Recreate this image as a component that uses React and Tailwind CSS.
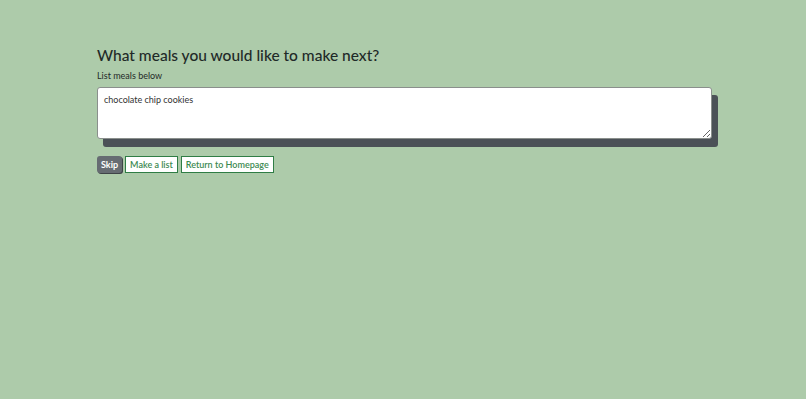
export default function App() {
  return (
    <div className="min-h-screen bg-[#adcbaa] text-[#1f2a28]" style={{ fontFamily: 'Lato, "Noto Sans", sans-serif' }}>
      <div className="pl-[97px] pt-[45px]">
        <h1 className="text-[15.5px] font-medium leading-[20px]">What meals you would like to make next?</h1>
        <p className="mt-[5px] text-[9px] leading-[11px]">List meals below</p>
        <div className="mt-[6px] w-[615px]">
          <textarea
            className="block h-[52px] w-full resize-y rounded-[3px] border border-[#8a8f8c] bg-white px-[6px] pt-[6px] pb-[4px] text-[9px] leading-[12px] text-[#333] shadow-[6px_8px_0_#4b5157] outline-none"
            defaultValue="chocolate chip cookies"
          />
        </div>
        <div className="mt-[17px] flex gap-[3px]">
          <button className="h-[17px] rounded-[3px] bg-[#666c72] px-[4px] text-[9px] font-bold leading-none text-white shadow-[1px_1px_0_#3f4448]">Skip</button>
          <button className="h-[17px] border border-[#2f7d45] bg-white px-[4px] text-[9px] font-semibold leading-none text-[#3d8a52]">Make a list</button>
          <button className="h-[17px] border border-[#2f7d45] bg-white px-[4px] text-[9px] font-semibold leading-none text-[#3d8a52]">Return to Homepage</button>
        </div>
      </div>
    </div>
  );
}
